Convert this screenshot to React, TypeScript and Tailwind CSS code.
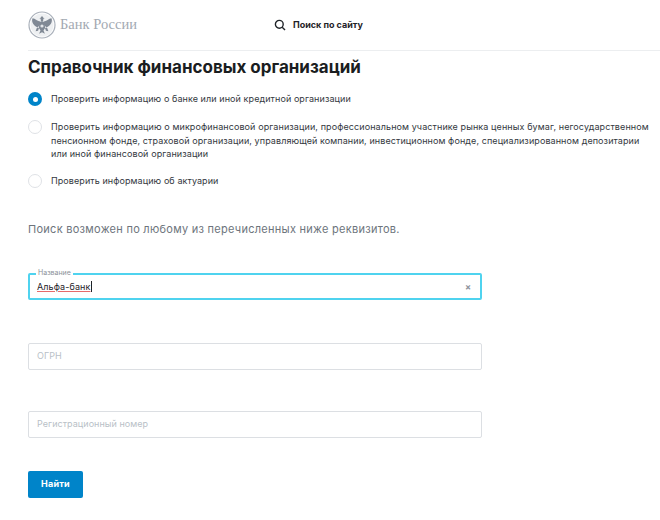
const inter = "font-['Inter','Noto_Sans',sans-serif]";

function Logo() {
  return (
    <svg width="28" height="28" viewBox="0 0 28 28" className="shrink-0">
      <circle cx="14" cy="14" r="13" fill="none" stroke="#a9b0ba" strokeWidth="1.2" />
      <circle cx="14" cy="14" r="11.5" fill="#eef0f2" />
      <g fill="#808995">
        <path d="M14 5.5c-.9 0-1.4.7-1.4 1.5l-1.4.3 1.4.5.4 3h2l.4-3 1.4-.5-1.4-.3c0-.8-.5-1.5-1.4-1.5z" />
        <path d="M12.6 10.5 11.8 14 9.8 16.2c-2.2-.4-4.6-2.4-5.4-5-.5-1.7-.3-2.9.2-3.9 1.4.2 2.4.8 3.4 1.5 1 .8 2.6 1.6 4.6 1.7z" />
        <path d="M15.4 10.5l.8 3.5 2 2.2c2.2-.4 4.6-2.4 5.4-5 .5-1.7.3-2.9-.2-3.9-1.4.2-2.4.8-3.4 1.5-1 .8-2.6 1.6-4.6 1.7z" />
        <path d="M11.5 11h5l.6 6-1.6 2.5 1.4 3.2-2.9-1.4-2.9 1.4 1.4-3.2-1.6-2.5z" />
        <path d="M9 16.5l2 .5-.9 2.7-2.5.6zM19 16.5l-2 .5.9 2.7 2.5.6z" />
      </g>
      <circle cx="14" cy="15" r="1.6" fill="#e3e6ea" />
    </svg>
  );
}

function Radio({ checked }: { checked?: boolean }) {
  return checked ? (
    <span className="flex h-[14px] w-[14px] shrink-0 items-center justify-center rounded-full bg-[#0084c9]">
      <span className="h-[5px] w-[5px] rounded-full bg-white" />
    </span>
  ) : (
    <span className="h-[14px] w-[14px] shrink-0 rounded-full border border-[#dfe2e6] bg-white" />
  );
}

function Field({ label }: { label: string }) {
  return (
    <div className="flex h-[27px] w-[454px] items-center rounded-[2px] border border-[#dcdfe3] bg-white pl-[8px] text-[9px] tracking-[0.05px] text-[#b9bfc7]">
      {label}
    </div>
  );
}

export default function App() {
  return (
    <div className={`${inter} h-[520px] w-[660px] overflow-hidden bg-white pl-[28px] text-[#1f2328]`}>
      <header className="flex h-[51px] items-center border-b border-[#eceef0] pb-[1px]">
        <Logo />
        <span className="ml-[4px] font-['Liberation_Serif',serif] text-[14.5px] text-[#a3a9b2]">Банк России</span>
        <svg width="12" height="12" viewBox="0 0 12 12" className="ml-[137px]" fill="none" stroke="#1f2328" strokeWidth="1.4">
          <circle cx="5.3" cy="5.3" r="3.9" />
          <path d="M8.2 8.2 11 11" />
        </svg>
        <span className="ml-[7px] text-[9px] font-bold text-[#1f2328]">Поиск по сайту</span>
      </header>

      <h1 className="mt-[4px] text-[17px] leading-[24px] font-bold text-[#1a1d21]">
        Справочник финансовых организаций
      </h1>

      <div className="mt-[13px] flex items-center gap-[9px] text-[9px] leading-[14px] tracking-[0.08px] text-[#33383e]">
        <Radio checked />
        <span>Проверить информацию о банке или иной кредитной организации</span>
      </div>
      <div className="mt-[14px] flex w-[625px] gap-[9px] text-[9px] leading-[13.5px] tracking-[0.09px] text-[#33383e]">
        <Radio />
        <span>
          <span className="tracking-[0.1px]">
            Проверить информацию о микрофинансовой организации, профессиональном участнике рынка ценных бумаг, негосударственном
          </span>{" "}
          пенсионном фонде, страховой организации, управляющей компании, инвестиционном фонде, специализированном депозитарии или иной финансовой организации
        </span>
      </div>
      <div className="mt-[13px] flex items-center gap-[9px] text-[9px] leading-[14px] tracking-[0.08px] text-[#33383e]">
        <Radio />
        <span>Проверить информацию об актуарии</span>
      </div>

      <p className="mt-[33px] text-[11px] leading-[16px] tracking-[0.27px] text-[#6d747c]">
        Поиск возможен по любому из перечисленных ниже реквизитов.
      </p>

      <div className="relative mt-[36px] flex h-[27px] w-[454px] items-center rounded-[2px] border-2 border-[#4fd3ef] bg-white pl-[7px] pr-[9px]">
        <span className="absolute -top-[6px] left-[6px] bg-white px-[2px] text-[7px] leading-[8px] text-[#8b9199]">
          Название
        </span>
        <span className="border-r border-[#1f2328] text-[9px] leading-[11px] tracking-[0.1px] text-[#1f2328] underline decoration-[#e86a6a] decoration-[1px] underline-offset-[1px]">
          Альфа-банк
        </span>
        <span className="ml-auto text-[9px] leading-none font-bold text-[#8f959d]">×</span>
      </div>

      <div className="mt-[43px]">
        <Field label="ОГРН" />
      </div>
      <div className="mt-[41px]">
        <Field label="Регистрационный номер" />
      </div>

      <button className="mt-[33px] block h-[27px] w-[55px] rounded-[2px] bg-[#0084c9] text-[9px] font-bold tracking-[0.2px] text-white">
        Найти
      </button>
    </div>
  );
}
